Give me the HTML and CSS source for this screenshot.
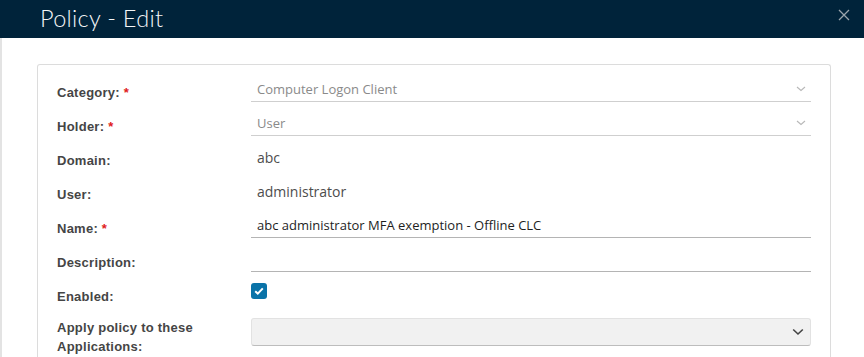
FILE: index.html
```html
<!DOCTYPE html>
<html>
<head>
<meta charset="utf-8">
<link rel="stylesheet" href="styles.css">
</head>
<body>
<div class="modal">
  <header class="modal-header">
    <h1 class="modal-title">Policy - Edit</h1>
    <button class="close" aria-label="Close">
      <svg width="12" height="12" viewBox="0 0 12 12"><path d="M1 1L11 11M11 1L1 11" stroke="#9aa4ab" stroke-width="1.3" fill="none"/></svg>
    </button>
  </header>
  <div class="modal-body">
    <div class="card">
      <div class="row">
        <label class="label">Category: <span class="req">*</span></label>
        <div class="field select-line">
          <span class="value muted">Computer Logon Client</span>
          <svg class="chev" width="10" height="6" viewBox="0 0 10 6"><path d="M1 1L5 4.5L9 1" stroke="#b8b8b8" stroke-width="1.1" fill="none"/></svg>
        </div>
      </div>
      <div class="row">
        <label class="label">Holder: <span class="req">*</span></label>
        <div class="field select-line">
          <span class="value muted">User</span>
          <svg class="chev" width="10" height="6" viewBox="0 0 10 6"><path d="M1 1L5 4.5L9 1" stroke="#b8b8b8" stroke-width="1.1" fill="none"/></svg>
        </div>
      </div>
      <div class="row">
        <label class="label">Domain:</label>
        <div class="field static"><span class="value plain">abc</span></div>
      </div>
      <div class="row">
        <label class="label">User:</label>
        <div class="field static"><span class="value plain">administrator</span></div>
      </div>
      <div class="row">
        <label class="label">Name: <span class="req">*</span></label>
        <div class="field input-line"><span class="value dark">abc administrator MFA exemption - Offline CLC</span></div>
      </div>
      <div class="row">
        <label class="label">Description:</label>
        <div class="field input-line"></div>
      </div>
      <div class="row">
        <label class="label">Enabled:</label>
        <div class="check-wrap">
          <span class="checkbox">
            <svg width="10" height="8" viewBox="0 0 10 8"><path d="M1.2 4.2L3.8 6.6L8.8 1.4" stroke="#fff" stroke-width="2" fill="none"/></svg>
          </span>
        </div>
      </div>
      <div class="row row-tall">
        <label class="label label-multi">Apply policy to these Applications:</label>
        <div class="select-box">
          <svg width="12" height="8" viewBox="0 0 12 8"><path d="M1.2 1.5L6 6L10.8 1.5" stroke="#444" stroke-width="1.6" fill="none"/></svg>
        </div>
      </div>
    </div>
  </div>
</div>
</body>
</html>
```

FILE: styles.css
```css
* { box-sizing: border-box; }
html, body { margin: 0; padding: 0; background: #fff; overflow: hidden; }
body { font-family: "Liberation Sans", Arial, sans-serif; }

.modal { width: 864px; height: 357px; }

.modal-header {
  height: 38px;
  background: #00233a;
  display: flex;
  align-items: center;
  justify-content: space-between;
  padding: 0 14px 0 40px;
}
.modal-title {
  margin: 0;
  font-family: "Lato", sans-serif;
  font-weight: 300;
  font-size: 23.5px;
  color: #f4f6f8;
  letter-spacing: 0.3px;
  line-height: 38px;
  padding-bottom: 3px;
}
.close {
  border: 0;
  background: none;
  padding: 0;
  width: 12px;
  height: 12px;
  margin-bottom: 8px;
  display: flex;
}

.modal-body {
  height: 319px;
  border-left: 2px solid #e3e3e3;
  padding: 26px 33px 0 35px;
}

.card {
  border: 1px solid #dcdcdc;
  border-bottom: 0;
  border-radius: 3px 3px 0 0;
  padding: 11px 18px 0 19px;
  height: 100%;
}

.row {
  display: grid;
  grid-template-columns: 194px 560px;
  height: 34px;
  align-items: start;
}
.row-tall { height: 46px; }

.label {
  font-size: 13px;
  font-weight: bold;
  color: #454545;
  line-height: 16px;
  padding-top: 9px;
  letter-spacing: 0.25px;
}
.label-multi { line-height: 19px; padding-top: 4px; }
.req { color: #e02020; font-weight: bold; }

.field {
  height: 26px;
  display: flex;
  align-items: center;
  justify-content: space-between;
  padding: 1px 0 0 6px;
}
.select-line { border-bottom: 1px solid #cfcfcf; padding-right: 5px; }
.input-line { border-bottom: 1px solid #b4b4b4; }

.value { font-family: "Open Sans", sans-serif; font-size: 13px; line-height: 16px; }
.muted { color: #8a8a8a; }
.plain { color: #4d4d4d; font-size: 14px; }
.dark { color: #1e1e1e; }

.chev { display: block; }

.check-wrap { padding-top: 3px; }
.checkbox {
  width: 16px;
  height: 16px;
  border-radius: 3px;
  background: #0a73a8;
  display: flex;
  align-items: center;
  justify-content: center;
}

.select-box {
  margin-top: 4px;
  height: 28px;
  background: #f1f1f1;
  border: 1px solid #e2e2e2;
  border-bottom: 1px solid #bdbdbd;
  border-radius: 3px;
  display: flex;
  align-items: center;
  justify-content: flex-end;
  padding-right: 6px;
}
```
